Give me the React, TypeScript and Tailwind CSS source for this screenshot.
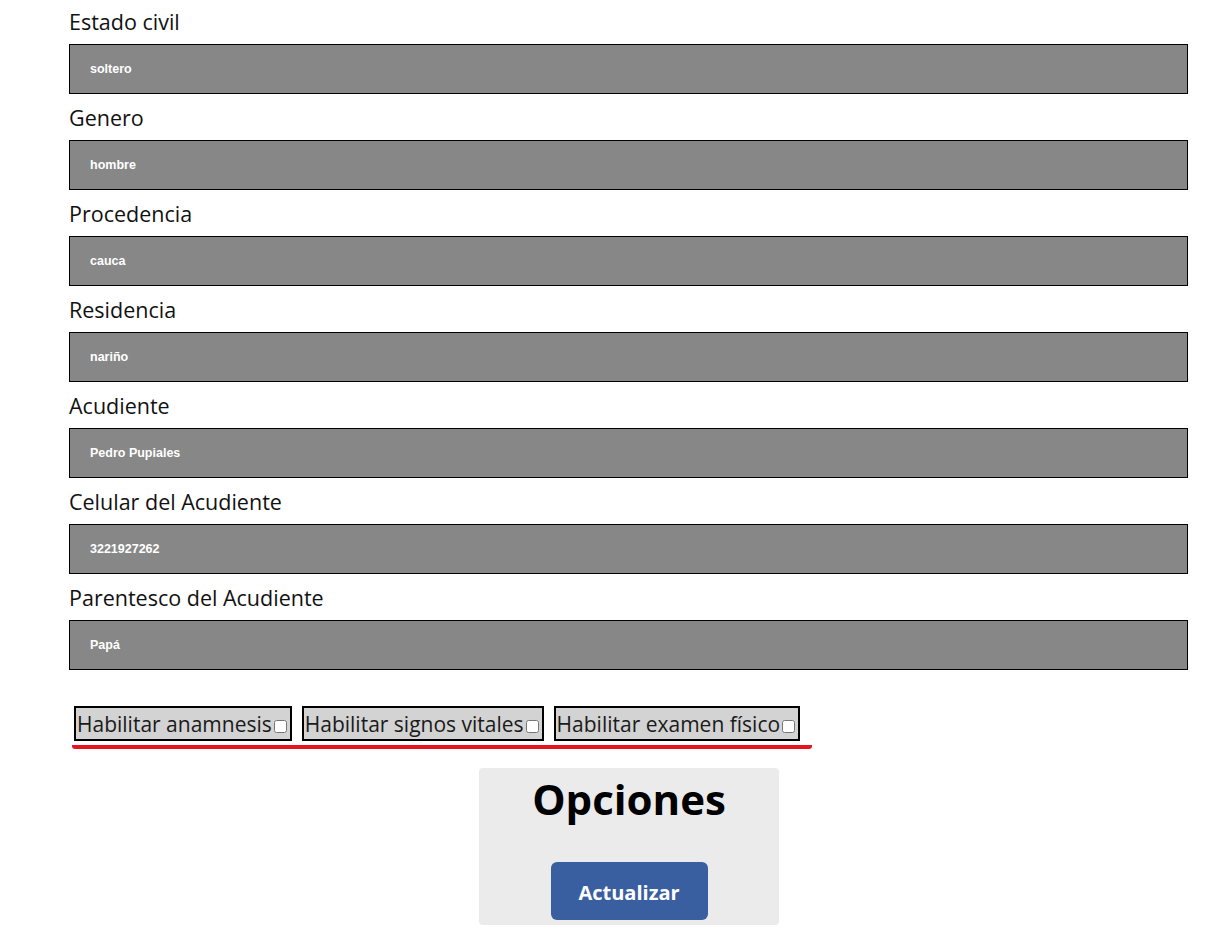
const fields = [
  { label: "Estado civil", value: "soltero" },
  { label: "Genero", value: "hombre" },
  { label: "Procedencia", value: "cauca" },
  { label: "Residencia", value: "nariño" },
  { label: "Acudiente", value: "Pedro Pupiales" },
  { label: "Celular del Acudiente", value: "3221927262" },
  { label: "Parentesco del Acudiente", value: "Papá" },
]

const toggles = ["Habilitar anamnesis", "Habilitar signos vitales", "Habilitar examen físico"]

export default function App() {
  return (
    <div className="min-h-[930px] bg-white font-['Open_Sans','Noto_Sans',sans-serif] text-black">
      <div className="pl-[69px] pr-[38px] pt-[8px]">
        {fields.map((f) => (
          <div key={f.label} className="mb-[10px]">
            <label className="block text-[21.5px] leading-[28px] mb-[8px] text-[#111]">{f.label}</label>
            <div className="h-[50px] border border-black bg-[#878787] flex items-center pl-[20px]">
              <span className="font-['Liberation_Sans',Arial,sans-serif] text-[12.5px] font-bold text-white mt-[1px]">
                {f.value}
              </span>
            </div>
          </div>
        ))}
      </div>

      <div className="pl-[72px] mt-[36px]">
        <div className="inline-flex gap-[10px] pl-[2px] pr-[12px] pb-[4px] border-b-[4px] border-[#e8141c] rounded-[3px]">
          {toggles.map((t) => (
            <label
              key={t}
              className="h-[35px] flex items-center border-2 border-black bg-[#d3d3d3] pl-[1px] pr-[3px] pt-[3px] text-[21px] text-[#1a1a1a]"
            >
              <span>{t}</span>
              <input type="checkbox" className="ml-[2px] mt-[3px] w-[13px] h-[13px]" />
            </label>
          ))}
        </div>
      </div>

      <div className="flex justify-center mt-[19px] pl-[32px]">
        <div className="w-[300px] h-[157px] bg-[#ebebeb] rounded-[4px] flex flex-col items-center">
          <h1 className="text-[42px] font-bold leading-[52px] mt-[5px]">Opciones</h1>
          <button className="mt-[37px] w-[157px] h-[58px] rounded-[6px] bg-[#3a5fa1] text-white text-[20px] font-bold pt-[4px]">
            Actualizar
          </button>
        </div>
      </div>
    </div>
  )
}
